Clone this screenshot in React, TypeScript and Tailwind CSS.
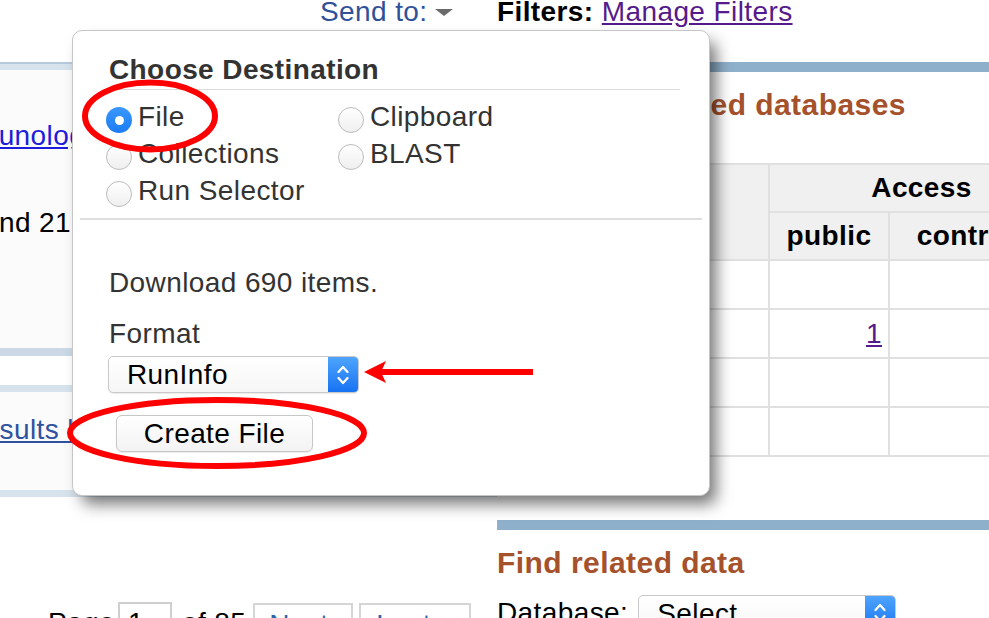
import React from "react";

function Radio({ checked, label }: { checked?: boolean; label: string }) {
  return (
    <div className="flex items-center h-[37px] whitespace-nowrap">
      {checked ? (
        <span className="mt-[7px] w-[26px] h-[26px] shrink-0 rounded-full bg-gradient-to-b from-[#3a97fd] to-[#1a7cf5] flex items-center justify-center">
          <span className="w-[9px] h-[9px] rounded-full bg-white" />
        </span>
      ) : (
        <span className="mt-[7px] w-[26px] h-[26px] shrink-0 rounded-full border border-[#bcbcbc] bg-gradient-to-b from-white to-[#efefef] shadow-[inset_0_1px_1px_rgba(255,255,255,0.9)]" />
      )}
      <span className="ml-[6px]">{label}</span>
    </div>
  );
}

function Chevrons() {
  return (
    <svg width="12" height="22" viewBox="0 0 12 22">
      <polyline points="1.5,8 6,3 10.5,8" fill="none" stroke="white" strokeWidth="2.2" strokeLinecap="round" strokeLinejoin="round" />
      <polyline points="1.5,14 6,19 10.5,14" fill="none" stroke="white" strokeWidth="2.2" strokeLinecap="round" strokeLinejoin="round" />
    </svg>
  );
}

export default function App() {
  return (
    <div className="relative w-[989px] h-[618px] overflow-hidden bg-white font-['Liberation_Sans',Arial,sans-serif] text-[28px] tracking-[0.4px] text-black">
      {/* top row */}
      <div className="flex h-[23px] leading-[23px] whitespace-nowrap">
        <div className="w-[497px] shrink-0 pl-[320px] flex items-center">
          <span className="text-[#30509a]">Send to:</span>
          <span className="ml-[7px] mt-[1px] w-0 h-0 border-l-[9px] border-r-[9px] border-t-[7px] border-l-transparent border-r-transparent border-t-[#6b6b6b]" />
        </div>
        <div>
          <span className="font-bold">Filters:</span>{" "}
          <a className="text-[#551a8b] underline">Manage Filters</a>
        </div>
      </div>

      <div className="flex">
        {/* left column */}
        <div className="w-[497px] shrink-0 overflow-hidden whitespace-nowrap">
          <div className="mt-[39px] h-[8px] bg-[#d6e2ec] border-t-2 border-[#b7cadb]" />
          <div className="h-[278px] bg-[#fbfbfb] pt-[50px]">
            <a className="block -ml-[57px] leading-[32px] text-[#1d1ddb] underline">Immunology profiling study</a>
            <p className="-ml-[17px] mt-[55px] leading-[32px]">and 21 more samples</p>
          </div>
          <div className="h-[8px] bg-[#cbd9e6]" />
          <div className="h-[29px]" />
          <div className="h-[7px] bg-[#d6e2ec]" />
          <div className="h-[98px] bg-[#fbfbfb] pt-[22px]">
            <a className="block -ml-[37px] leading-[32px] text-[#2f52a0] underline">Results by taxon</a>
          </div>
          <div className="h-[7px] bg-[#d6e2ec]" />
          <div className="mt-[105px] flex items-start pl-[48px]">
            <span className="mt-[5px] leading-[32px]">Page</span>
            <span className="ml-[3px] w-[54px] h-[36px] border-2 border-[#cfcfcf] pl-[8px] leading-[38px]">1</span>
            <span className="ml-[10px] mt-[5px] leading-[32px]">of 85</span>
            <span className="ml-[7px] mt-[1px] w-[100px] h-[36px] border-2 border-[#d5d5d5] pl-[14px] leading-[40px] text-[#2a63ad]">Next &gt;</span>
            <span className="ml-[6px] mt-[1px] w-[112px] h-[36px] border-2 border-[#d5d5d5] pl-[15px] leading-[40px] text-[#2a63ad]">Last &gt;&gt;</span>
          </div>
        </div>

        {/* right column */}
        <div className="w-[600px] shrink-0 whitespace-nowrap">
          <div className="mt-[39px] h-[10px] bg-[#8fb0cb]" />
          <h2 className="mt-[16px] text-[30px] leading-[34px] font-bold text-[#a5522c] tracking-[0.45px]">Search in related databases</h2>
          <table className="mt-[41px] border-collapse table-fixed w-[586px]">
            <colgroup>
              <col className="w-[271px]" />
              <col className="w-[120px]" />
              <col className="w-[195px]" />
            </colgroup>
            <thead>
              <tr className="h-[48px]">
                <th rowSpan={2} className="bg-[#f0f0f0] border-2 border-[#e0e0e0] font-bold text-left pl-[8px]">Database</th>
                <th colSpan={2} className="bg-[#f0f0f0] border-2 border-[#e0e0e0] font-bold text-center pr-[10px]">Access</th>
              </tr>
              <tr className="h-[48px]">
                <th className="bg-[#f0f0f0] border-2 border-[#e0e0e0] font-bold text-center">public</th>
                <th className="bg-[#f0f0f0] border-2 border-[#e0e0e0] font-bold text-center">controlled</th>
              </tr>
            </thead>
            <tbody>
              <tr className="h-[49px]">
                <td className="border-2 border-[#e0e0e0] pl-[8px]">BioProject</td>
                <td className="border-2 border-[#e0e0e0]" />
                <td className="border-2 border-[#e0e0e0]" />
              </tr>
              <tr className="h-[49px]">
                <td className="border-2 border-[#e0e0e0] pl-[8px]">BioSample</td>
                <td className="border-2 border-[#e0e0e0] text-right pr-[6px]">
                  <a className="text-[#551a8b] underline">1</a>
                </td>
                <td className="border-2 border-[#e0e0e0]" />
              </tr>
              <tr className="h-[49px]">
                <td className="border-2 border-[#e0e0e0] pl-[8px]">GEO</td>
                <td className="border-2 border-[#e0e0e0]" />
                <td className="border-2 border-[#e0e0e0]" />
              </tr>
              <tr className="h-[49px]">
                <td className="border-2 border-[#e0e0e0] pl-[8px]">dbGaP</td>
                <td className="border-2 border-[#e0e0e0]" />
                <td className="border-2 border-[#e0e0e0]" />
              </tr>
            </tbody>
          </table>
          <div className="mt-[63px] h-[10px] bg-[#8fb0cb]" />
          <h2 className="mt-[16px] text-[30px] leading-[34px] font-bold text-[#a5522c] tracking-[0.45px]">Find related data</h2>
          <div className="mt-[15px] flex items-start">
            <span className="mt-[2px] leading-[32px]">Database:</span>
            <div className="ml-[10px] w-[258px] h-[36px] flex rounded-[5px] border border-[#c9c9c9] bg-gradient-to-b from-white to-[#f7f7f7] overflow-hidden">
              <span className="flex-1 pl-[18px] leading-[36px]">Select</span>
              <span className="w-[30px] bg-gradient-to-b from-[#4ea4fd] to-[#1672f2] flex items-center justify-center">
                <Chevrons />
              </span>
            </div>
          </div>
        </div>
      </div>

      {/* popup */}
      <div className="absolute left-[72px] top-[30px] w-[638px] h-[466px] bg-white border border-[#c6c6c6] rounded-[10px] shadow-[8px_10px_16px_-2px_rgba(0,0,0,0.55)] text-[#333] whitespace-nowrap">
        <div className="pl-[36px] pr-[29px] pt-[23px]">
          <div className="font-bold leading-[32px] pb-[3px] border-b border-[#dcdcdc]">Choose Destination</div>
        </div>
        <div className="mt-[8px] pl-[33px] grid grid-cols-[232px_auto]">
          <Radio checked label="File" />
          <Radio label="Clipboard" />
          <Radio label="Collections" />
          <Radio label="BLAST" />
          <Radio label="Run Selector" />
        </div>
        <div className="mt-[9px] mx-[7px] h-[2px] bg-[#dedede]" />
        <div className="pl-[36px]">
          <p className="mt-[47px] leading-[32px]">Download 690 items.</p>
          <p className="mt-[19px] leading-[32px]">Format</p>
          <div className="mt-[6px] -ml-[1px] w-[251px] h-[37px] flex rounded-[5px] border border-[#c9c9c9] bg-gradient-to-b from-white to-[#f6f6f6] shadow-[0_1px_1px_rgba(0,0,0,0.08)] overflow-hidden">
            <span className="flex-1 pl-[18px] leading-[35px] text-black">RunInfo</span>
            <span className="w-[30px] bg-gradient-to-b from-[#4ea4fd] to-[#1672f2] flex items-center justify-center">
              <Chevrons />
            </span>
          </div>
          <button className="mt-[22px] ml-[7px] block w-[197px] h-[37px] rounded-[6px] border border-[#c7c7c7] bg-gradient-to-b from-white to-[#f3f3f3] shadow-[0_1px_1px_rgba(0,0,0,0.08)] text-black leading-[35px] text-center tracking-[0.4px]">
            Create File
          </button>
        </div>
      </div>

      {/* annotations */}
      <svg className="absolute left-0 top-0 pointer-events-none" width="989" height="618">
        <ellipse cx="150" cy="116" rx="65" ry="33.5" fill="none" stroke="#ff0000" strokeWidth="6" />
        <ellipse cx="217" cy="433" rx="147" ry="33" fill="none" stroke="#ff0000" strokeWidth="6" />
        <line x1="378" y1="372" x2="533" y2="372" stroke="#ff0000" strokeWidth="6" />
        <polygon points="364,372 386,361 381,372 386,383" fill="#ff0000" />
      </svg>
    </div>
  );
}
